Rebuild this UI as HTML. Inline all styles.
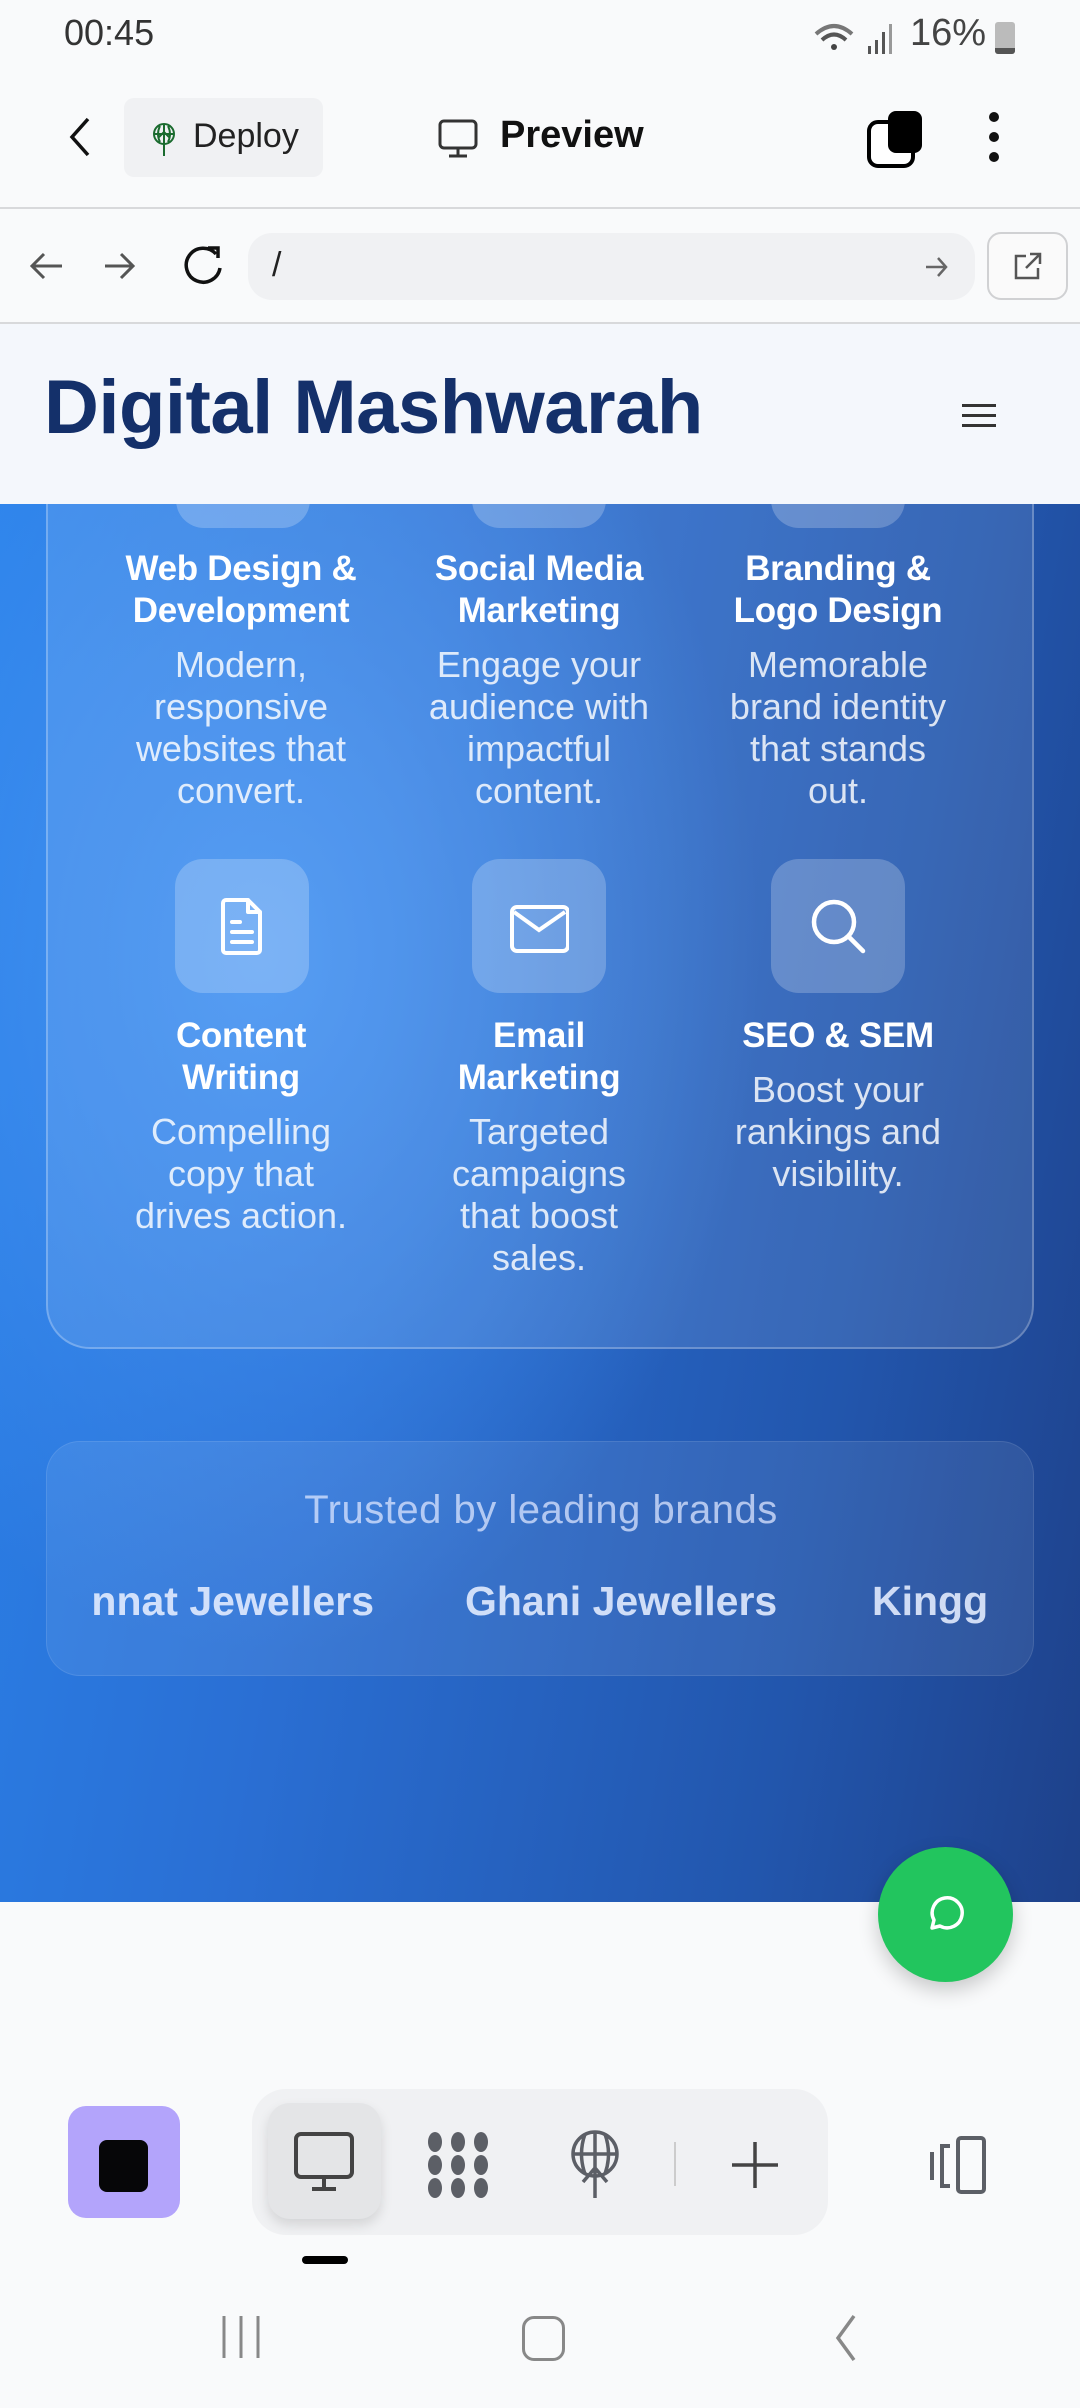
<!DOCTYPE html>
<html><head><meta charset="utf-8"><style>
*{margin:0;padding:0;box-sizing:border-box}
body{width:1080px;height:2408px;position:relative;overflow:hidden;background:#f9fafb;font-family:"Liberation Sans",sans-serif}
.a{position:absolute}
.blue{left:0;top:504px;width:1080px;height:1398px;background:radial-gradient(ellipse 500px 700px at 260px 450px,rgba(70,150,245,.9),rgba(70,150,245,0) 100%),linear-gradient(100deg,#2b82ea 0%,#2a6fd4 35%,#2256ad 75%,#1e418a 100%)}
.card{left:46px;top:-84px;width:988px;height:929px;border:2px solid rgba(255,255,255,.25);border-radius:44px;background:rgba(255,255,255,.1)}
.col{position:absolute;width:300px;text-align:center;color:#fff}
.t{font-weight:bold;font-size:35px;line-height:42px;letter-spacing:-.3px}
.d{font-size:36px;line-height:42px;color:rgba(255,255,255,.82);margin:12px auto 0;width:232px}
.ib{position:absolute;width:134px;height:134px;border-radius:28px;background:rgba(255,255,255,.22)}
.ib svg{position:absolute;left:37px;top:37px}
</style></head><body>
<!-- status bar -->
<div class="a" style="left:64px;top:12px;font-size:36px;color:#333">00:45</div>
<div class="a" style="left:910px;top:12px;font-size:38px;color:#444">16%</div>
<svg class="a" style="left:812px;top:20px" width="90" height="36"><path d="M4 14 Q22 -2 40 14" stroke="#777" stroke-width="4" fill="none"/><path d="M10 20 Q22 9 34 20" stroke="#555" stroke-width="4" fill="none"/><circle cx="22" cy="27" r="3" fill="#444"/><rect x="56" y="26" width="3" height="8" fill="#555"/><rect x="63" y="20" width="3" height="14" fill="#555"/><rect x="70" y="12" width="3" height="22" fill="#555"/><rect x="77" y="4" width="3" height="30" fill="#999"/></svg>
<div class="a" style="left:995px;top:22px;width:20px;height:32px;background:#bbb;border-radius:3px"><div style="position:absolute;bottom:0;left:0;width:20px;height:6px;background:#555;border-radius:0 0 3px 3px"></div></div>
<!-- toolbar -->
<svg class="a" style="left:64px;top:115px" width="30" height="44"><path d="M24 4 L8 22 L24 40" stroke="#111" stroke-width="3.5" fill="none"/></svg>
<div class="a" style="left:124px;top:98px;width:199px;height:79px;background:#f0f1f3;border-radius:10px"></div>
<svg class="a" style="left:150px;top:122px" width="28" height="36"><circle cx="14" cy="12" r="10" stroke="#1a6b2e" stroke-width="2" fill="none"/><path d="M4 12 H24 M14 2 V34 M8 16 L14 10 L20 16 M10 4 Q6 12 10 20 M18 4 Q22 12 18 20" stroke="#1a6b2e" stroke-width="2" fill="none"/></svg>
<div class="a" style="left:193px;top:117px;font-size:34px;color:#222">Deploy</div>
<svg class="a" style="left:437px;top:118px" width="42" height="42"><rect x="3" y="3" width="36" height="27" rx="4" stroke="#333" stroke-width="3" fill="none"/><path d="M21 30 V37 M12 38 H30" stroke="#333" stroke-width="3"/></svg>
<div class="a" style="left:500px;top:114px;font-size:38px;font-weight:bold;color:#111">Preview</div>
<svg class="a" style="left:866px;top:108px" width="60" height="60"><rect x="3" y="14" width="44" height="44" rx="9" stroke="#000" stroke-width="4" fill="#fff"/><rect x="22" y="3" width="34" height="42" rx="8" fill="#000"/></svg>
<div class="a" style="left:989px;top:112px;width:10px;height:10px;border-radius:5px;background:#111"></div>
<div class="a" style="left:989px;top:132px;width:10px;height:10px;border-radius:5px;background:#111"></div>
<div class="a" style="left:989px;top:152px;width:10px;height:10px;border-radius:5px;background:#111"></div>
<div class="a" style="left:0;top:207px;width:1080px;height:2px;background:#d8d9db"></div>
<!-- url row -->
<svg class="a" style="left:26px;top:248px" width="110" height="40"><path d="M36 18 H6 M18 6 L6 18 L18 30" stroke="#555" stroke-width="3" fill="none"/><path d="M84 18 H112 M100 6 L112 18 L100 30" stroke="#555" stroke-width="3" fill="none" transform="translate(-5,0)"/></svg>
<svg class="a" style="left:180px;top:244px" width="46" height="46"><path d="M36 10 A17 17 0 1 0 40 24" stroke="#111" stroke-width="3.5" fill="none"/><path d="M28 4 H38 V14" stroke="#111" stroke-width="3.5" fill="none"/></svg>
<div class="a" style="left:248px;top:233px;width:727px;height:67px;background:#f0f1f3;border-radius:24px"></div>
<div class="a" style="left:272px;top:246px;font-size:34px;color:#222">/</div>
<svg class="a" style="left:924px;top:254px" width="26" height="26"><path d="M2 13 H22 M14 4 L22 13 L14 22" stroke="#666" stroke-width="2.5" fill="none"/></svg>
<div class="a" style="left:987px;top:232px;width:81px;height:68px;border:2px solid #d0d1d3;border-radius:14px;background:#fafafa"></div>
<svg class="a" style="left:1012px;top:250px" width="32" height="32"><path d="M14 6 H4 V28 H26 V18 M18 4 H28 V14 M28 4 L14 18" stroke="#555" stroke-width="2.5" fill="none"/></svg>
<div class="a" style="left:0;top:322px;width:1080px;height:2px;background:#d8d9db"></div>
<!-- blue section -->
<div class="a blue">
 <div class="a card"></div>
 <div class="ib" style="left:176px;top:-110px"></div>
 <div class="ib" style="left:472px;top:-110px"></div>
 <div class="ib" style="left:771px;top:-110px"></div>
 <div class="col" style="left:91px;top:44px"><div class="t">Web Design &amp;<br>Development</div><div class="d">Modern, responsive websites that convert.</div></div>
 <div class="col" style="left:389px;top:44px"><div class="t">Social Media<br>Marketing</div><div class="d">Engage your audience with impactful content.</div></div>
 <div class="col" style="left:688px;top:44px"><div class="t">Branding &amp;<br>Logo Design</div><div class="d">Memorable brand identity that stands out.</div></div>
 <div class="ib" style="left:175px;top:355px"><svg width="60" height="60"><path d="M14 4 H36 L48 16 V54 A3 3 0 0 1 45 57 H14 A3 3 0 0 1 11 54 V7 A3 3 0 0 1 14 4 Z M36 4 V16 H48 M20 26 H28 M20 36 H40 M20 46 H40" stroke="#fff" stroke-width="4" fill="none" stroke-linejoin="round" stroke-linecap="round"/></svg></div>
 <div class="ib" style="left:472px;top:355px"><svg width="60" height="60"><rect x="6" y="11" width="56" height="44" rx="5" stroke="#fff" stroke-width="4" fill="none" transform="translate(-3,0)"/><path d="M5 16 L30 34 L56 16" stroke="#fff" stroke-width="4" fill="none"/></svg></div>
 <div class="ib" style="left:771px;top:355px"><svg width="62" height="62"><circle cx="26" cy="26" r="20" stroke="#fff" stroke-width="4.5" fill="none"/><path d="M41 41 L55 55" stroke="#fff" stroke-width="4.5" stroke-linecap="round"/></svg></div>
 <div class="col" style="left:91px;top:511px"><div class="t">Content<br>Writing</div><div class="d">Compelling copy that drives action.</div></div>
 <div class="col" style="left:389px;top:511px"><div class="t">Email<br>Marketing</div><div class="d">Targeted campaigns that boost sales.</div></div>
 <div class="col" style="left:688px;top:511px"><div class="t">SEO &amp; SEM</div><div class="d">Boost your rankings and visibility.</div></div>
 <!-- trusted -->
 <div class="a" style="left:46px;top:937px;width:988px;height:235px;border-radius:34px;background:rgba(255,255,255,.08);border:1px solid rgba(255,255,255,.1);overflow:hidden">
  <div class="a" style="left:0;top:46px;width:988px;text-align:center;font-size:40px;letter-spacing:.5px;color:rgba(220,230,255,.75)">Trusted by leading brands</div>
  <div class="a" style="left:46px;top:136px;width:281px;height:60px;overflow:hidden"><span class="a" style="right:0;top:0;font-size:41px;font-weight:bold;color:rgba(230,238,255,.88);white-space:nowrap">Jannat Jewellers</span></div>
  <span class="a" style="left:418px;top:136px;font-size:41px;font-weight:bold;color:rgba(230,238,255,.88);white-space:nowrap">Ghani Jewellers</span>
  <span class="a" style="left:825px;top:136px;font-size:41px;font-weight:bold;color:rgba(230,238,255,.88);white-space:nowrap">Kingg</span>
 </div>
</div>
<!-- header -->
<div class="a" style="left:0;top:324px;width:1080px;height:180px;background:#f4f7fc"></div>
<div class="a" style="left:44px;top:364px;font-size:76px;font-weight:bold;color:#14306a;letter-spacing:-.5px">Digital Mashwarah</div>
<div class="a" style="left:962px;top:404px;width:34px;height:3px;background:#333"></div>
<div class="a" style="left:962px;top:414px;width:34px;height:3px;background:#333"></div>
<div class="a" style="left:962px;top:424px;width:34px;height:3px;background:#333"></div>
<!-- whatsapp -->
<div class="a" style="left:878px;top:1847px;width:135px;height:135px;border-radius:68px;background:#22c55e;box-shadow:0 8px 20px rgba(0,0,0,.2)"></div>
<svg class="a" style="left:924px;top:1892px" width="44" height="44"><path d="M8 36 L10 28 A15 15 0 1 1 16 34 Z" stroke="#fff" stroke-width="3.5" fill="none" stroke-linejoin="round"/></svg>
<!-- bottom bar -->
<div class="a" style="left:68px;top:2106px;width:112px;height:112px;border-radius:18px;background:#b3a4fb"></div>
<div class="a" style="left:99px;top:2140px;width:49px;height:52px;border-radius:8px;background:#060608"></div>
<div class="a" style="left:252px;top:2089px;width:576px;height:146px;border-radius:34px;background:#f0f1f3"></div>
<div class="a" style="left:268px;top:2103px;width:113px;height:116px;border-radius:22px;background:#e4e5e7;box-shadow:0 6px 12px rgba(0,0,0,.12)"></div>
<svg class="a" style="left:292px;top:2130px" width="64" height="64"><rect x="4" y="4" width="56" height="43" rx="5" stroke="#444" stroke-width="4" fill="none"/><path d="M32 47 V58 M20 59 H44" stroke="#444" stroke-width="4"/></svg>
<svg class="a" style="left:424px;top:2130px" width="70" height="70"><g fill="#5c5f66"><ellipse cx="11" cy="12" rx="7" ry="10"/><ellipse cx="34" cy="12" rx="7" ry="10"/><ellipse cx="57" cy="12" rx="7" ry="10"/><ellipse cx="11" cy="35" rx="7" ry="10"/><ellipse cx="34" cy="35" rx="7" ry="10"/><ellipse cx="57" cy="35" rx="7" ry="10"/><ellipse cx="11" cy="58" rx="7" ry="10"/><ellipse cx="34" cy="58" rx="7" ry="10"/><ellipse cx="57" cy="58" rx="7" ry="10"/></g></svg>
<svg class="a" style="left:568px;top:2130px" width="54" height="70"><circle cx="27" cy="24" r="22" stroke="#5c5f66" stroke-width="3.5" fill="none"/><path d="M5 24 H49 M27 2 V68 M17 4 Q10 24 17 44 M37 4 Q44 24 37 44 M15 52 L27 38 L39 52" stroke="#5c5f66" stroke-width="3.5" fill="none"/></svg>
<div class="a" style="left:674px;top:2142px;width:2px;height:44px;background:#ccc"></div>
<svg class="a" style="left:728px;top:2138px" width="54" height="54"><path d="M27 4 V50 M4 27 H50" stroke="#444" stroke-width="3.5"/></svg>
<svg class="a" style="left:922px;top:2134px" width="70" height="64"><rect x="36" y="4" width="26" height="54" rx="3" stroke="#5c5f66" stroke-width="4" fill="none"/><path d="M28 12 H20 V52 H28 M10 18 V46" stroke="#5c5f66" stroke-width="4" fill="none"/></svg>
<div class="a" style="left:302px;top:2256px;width:46px;height:8px;border-radius:4px;background:#000"></div>
<!-- nav bar -->
<svg class="a" style="left:220px;top:2312px" width="44" height="50"><path d="M4 4 V46 M21 4 V46 M38 4 V46" stroke="#888" stroke-width="3"/></svg>
<div class="a" style="left:522px;top:2316px;width:43px;height:45px;border:3.5px solid #888;border-radius:12px"></div>
<svg class="a" style="left:830px;top:2312px" width="30" height="50"><path d="M24 4 L8 26 L24 48" stroke="#888" stroke-width="3.5" fill="none"/></svg>
</body></html>
